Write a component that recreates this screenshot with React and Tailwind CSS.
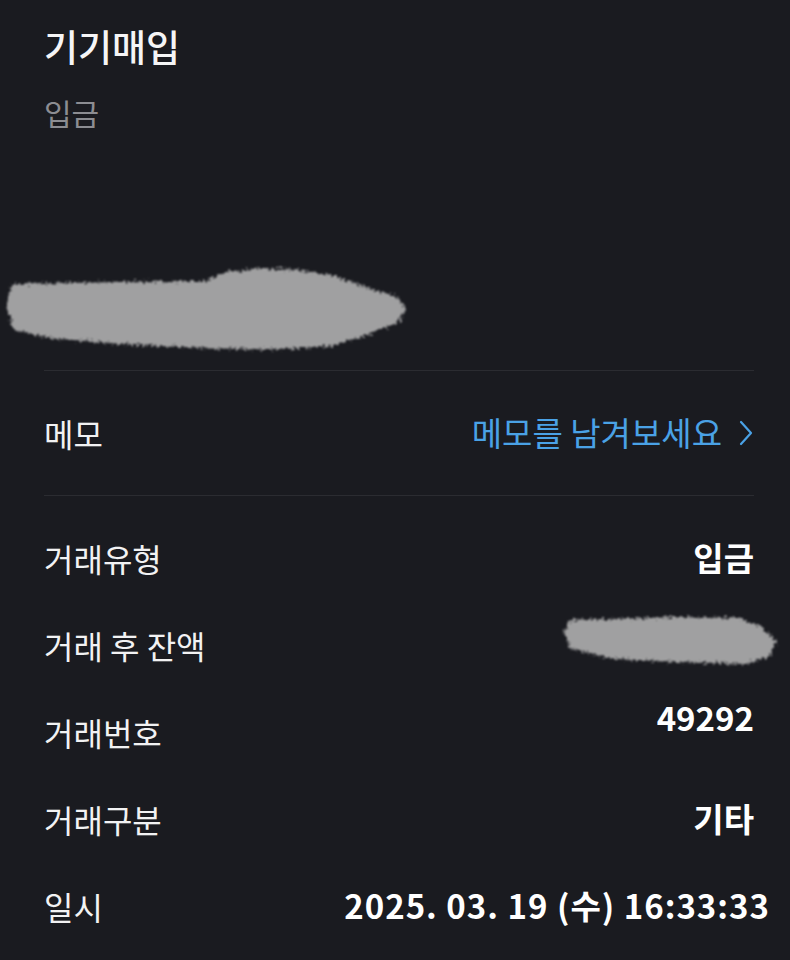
import React from "react";

const font = { fontFamily: '"Noto Sans CJK KR", "Noto Sans", sans-serif' };

function Blob({ width, height, d, id }) {
  return (
    <svg width={width} height={height} viewBox={`0 0 ${width} ${height}`} className="block">
      <defs>
        <filter id={id} x="-10%" y="-30%" width="120%" height="160%">
          <feTurbulence type="fractalNoise" baseFrequency="0.35" numOctaves="3" seed="4" result="n" />
          <feDisplacementMap in="SourceGraphic" in2="n" scale="9" xChannelSelector="R" yChannelSelector="G" result="d" />
          <feGaussianBlur in="d" stdDeviation="0.8" />
        </filter>
      </defs>
      <path d={d} fill="#a0a0a1" filter={`url(#${id})`} />
    </svg>
  );
}

function Row({ label, children }) {
  return (
    <div className="flex h-[87px] items-center justify-between">
      <span className="text-[32px] text-[#f2f2f3]">{label}</span>
      {children}
    </div>
  );
}

export default function App() {
  return (
    <div style={font} className="min-h-[960px] w-[790px] bg-[#1a1b20] text-white overflow-hidden">
      <div className="pl-[44px] pr-[36px]">
        <div className="pt-[22px] text-[37px] leading-[48px] font-medium text-[#f5f5f6]">기기매입</div>
        <div className="mt-[22px] text-[30px] leading-[40px] text-[#8c8d92]">입금</div>
      </div>
      <div className="mt-[114px] h-[124px]">
        <Blob
          id="b1"
          width={420}
          height={124}
          d="M12,38 L120,36 L205,35 L228,26 L262,22 L300,24 L335,30 L368,42 L396,50 L406,62 L398,76 L370,88 L330,100 L270,104 L200,102 L120,98 L50,92 L14,84 L6,60 Z"
        />
      </div>
      <div className="ml-[44px] mr-[36px] h-px bg-[#2b2c31]" />
      <div className="ml-[44px] mr-[36px] flex h-[124px] items-center justify-between">
        <span className="text-[32px] text-[#f2f2f3]">메모</span>
        <span className="flex items-center text-[33px] text-[#4aa2e6]">
          메모를 남겨보세요
          <svg width="16" height="28" viewBox="0 0 16 28" className="ml-[16px]" fill="none" stroke="#4aa2e6" strokeWidth="2.2" strokeLinecap="round" strokeLinejoin="round">
            <path d="M3 3 L13 14 L3 25" />
          </svg>
        </span>
      </div>
      <div className="ml-[44px] mr-[36px] h-px bg-[#2b2c31]" />
      <div className="mt-[18px] pl-[44px] pr-[36px]">
        <Row label="거래유형">
          <span className="text-[33px] font-bold text-white">입금</span>
        </Row>
        <Row label="거래 후 잔액">
          <div className="-mr-[28px] -mt-[12px]">
            <Blob
              id="b2"
              width={226}
              height={70}
              d="M14,16 L120,13 L182,14 L204,22 L220,36 L214,52 L190,60 L120,58 L50,54 L14,44 L8,28 Z"
            />
          </div>
        </Row>
        <Row label="거래번호">
          <span className="-mt-[28px] text-[33px] font-bold text-white">49292</span>
        </Row>
        <Row label="거래구분">
          <span className="text-[33px] font-bold text-white">기타</span>
        </Row>
        <Row label="일시">
          <span className="-mr-[16px] whitespace-nowrap text-[33px] font-bold tracking-[1px] text-white">2025. 03. 19 (수) 16:33:33</span>
        </Row>
      </div>
    </div>
  );
}
